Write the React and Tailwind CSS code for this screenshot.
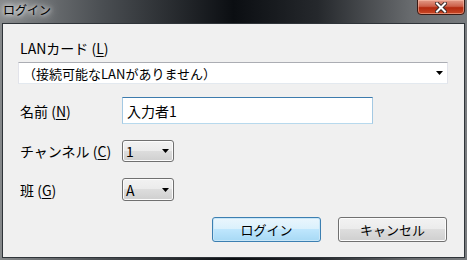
import { useState } from 'react';

const font = { fontFamily: '"Noto Sans CJK JP", "Noto Sans", sans-serif' };

function Arrow() {
  return (
    <svg width="7" height="4" viewBox="0 0 7 4" className="shrink-0">
      <path d="M0 0H7L3.5 4Z" fill="#000" />
    </svg>
  );
}

function SmallCombo({ value, tall }) {
  return (
    <div
      className={`flex items-center justify-between w-[52px] ${tall ? 'h-[23px]' : 'h-[22px]'} pl-[3px] pr-[4px] border border-[#707070] rounded-[3px] bg-[linear-gradient(to_bottom,#f2f2f2_0%,#ebebeb_50%,#dddddd_50%,#cfcfcf_100%)] shadow-[inset_0_0_0_1px_#fcfcfc]`}
    >
      <span className="text-[14px] leading-none text-black">{value}</span>
      <Arrow />
    </div>
  );
}

function Label({ text, accel }) {
  return (
    <div className="pl-[2px] h-4 flex items-center text-[14px] leading-4 text-black whitespace-nowrap">
      <span>
        {text} (<span className="underline underline-offset-2">{accel}</span>)
      </span>
    </div>
  );
}

export default function App() {
  const [name, setName] = useState('入力者1');

  return (
    <div
      className="w-[467px] h-[260px] flex flex-col leading-4 bg-[linear-gradient(to_right,#86898b_0%,#4a4e52_22%,#0b0e12_50%,#25282c_68%,#686b6e_88%,#787b7e_100%)]"
      style={font}
    >
      <div className="h-[23px] flex items-start justify-between shrink-0">
        <span className="pl-[3px] pt-[2px] text-[12px] leading-4 text-black [text-shadow:0_0_4px_#fff,0_0_8px_#fff,0_0_12px_rgba(255,255,255,0.8)]">
          ログイン
        </span>
        <div className="mr-[2px] mt-[-1px] w-[48px] h-[16px] flex items-center justify-center rounded-b-[4px] border border-[#3a1a14] bg-[linear-gradient(to_bottom,#e29a88_0%,#cc604a_45%,#b3290f_55%,#c94826_100%)] shadow-[inset_0_0_0_1px_rgba(255,200,180,0.5)]">
          <svg width="12" height="11" viewBox="0 0 12 11">
            <path d="M2 1.5L10 9.5M10 1.5L2 9.5" stroke="#3a2a28" strokeWidth="4" strokeLinecap="square" />
            <path d="M2 1.5L10 9.5M10 1.5L2 9.5" stroke="#fff" strokeWidth="2" strokeLinecap="square" />
          </svg>
        </div>
      </div>

      <div className="flex-1 mx-[2px] mb-[2px] border border-[#2f3439] bg-[#f0f0f0] pl-[15px] pr-[16px] pt-[16px] flex flex-col">
        <Label text="LANカード" accel="L" />

        <div className="mt-[6px] h-[22px] flex items-center justify-between bg-white border border-[#e2e3ea] border-t-[#abadb3] border-b-[#e3e9ef] pl-[4px] pr-[4px]">
          <span className="text-[13px] leading-none text-black">（接続可能なLANがありません）</span>
          <Arrow />
        </div>

        <div className="mt-[13px] h-[27px] grid grid-cols-[104px_1fr] items-center">
          <Label text="名前" accel="N" />
          <div className="w-[251px] h-[27px] flex items-center bg-white border border-[#a4c9e3] border-t-[#3d7bad] border-b-[#b7d9ed] pl-[4px]">
            <input
              value={name}
              onChange={(e) => setName(e.target.value)}
              className="w-full bg-transparent outline-none text-[14px] leading-none text-black caret-black"
              style={font}
              autoFocus
            />
          </div>
        </div>

        <div className="mt-[16px] h-[22px] grid grid-cols-[104px_1fr] items-center">
          <Label text="チャンネル" accel="C" />
          <SmallCombo value="1" />
        </div>

        <div className="mt-[16px] h-[23px] grid grid-cols-[104px_1fr] items-center">
          <Label text="班" accel="G" />
          <SmallCombo value="A" tall />
        </div>

        <div className="mt-[16px] flex justify-end gap-[17px] pr-[1px]">
          <button className="w-[109px] h-[25px] rounded-[3px] border border-[#3c7fb1] bg-[linear-gradient(to_bottom,#eaf6fd_0%,#d9f0fc_50%,#bee6fd_50%,#a7d9f5_100%)] shadow-[inset_0_0_0_1px_#c8e6f7] text-[13px] leading-none text-black">
            ログイン
          </button>
          <button className="w-[109px] h-[25px] rounded-[3px] border border-[#707070] bg-[linear-gradient(to_bottom,#f2f2f2_0%,#ebebeb_50%,#dddddd_50%,#cfcfcf_100%)] shadow-[inset_0_0_0_1px_#fcfcfc] text-[13px] leading-none text-black">
            キャンセル
          </button>
        </div>
      </div>
    </div>
  );
}
